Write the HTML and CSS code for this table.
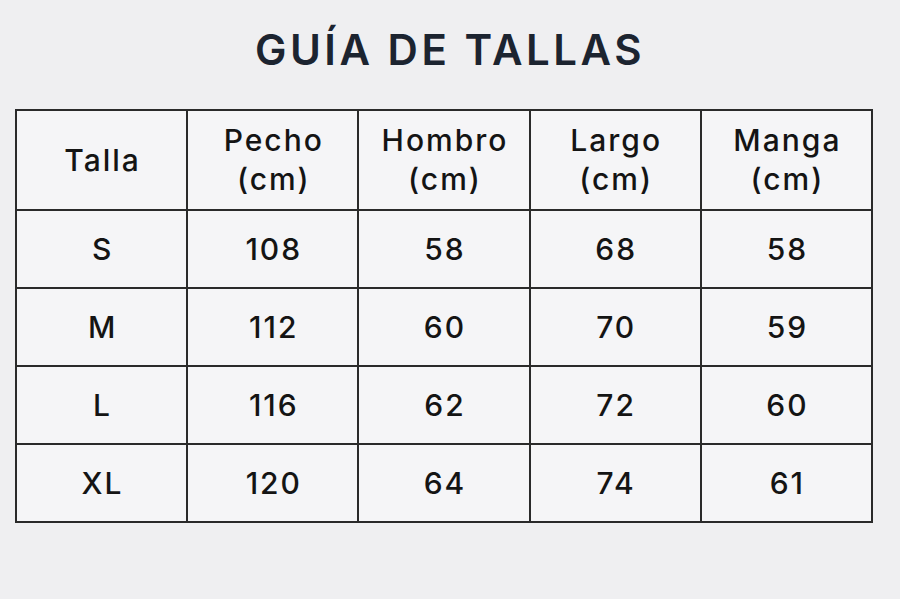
FILE: index.html
```html
<!DOCTYPE html>
<html lang="es">
<head>
<meta charset="utf-8">
<title>Guía de tallas</title>
<link rel="stylesheet" href="styles.css">
</head>
<body>
<main class="page">
  <h1 class="title">GUÍA DE TALLAS</h1>
  <table class="sizes">
    <thead>
      <tr class="head-row">
        <th>Talla</th>
        <th>Pecho<br>(cm)</th>
        <th>Hombro<br>(cm)</th>
        <th>Largo<br>(cm)</th>
        <th>Manga<br>(cm)</th>
      </tr>
    </thead>
    <tbody>
      <tr><td>S</td><td>108</td><td>58</td><td>68</td><td>58</td></tr>
      <tr><td>M</td><td>112</td><td>60</td><td>70</td><td>59</td></tr>
      <tr><td>L</td><td>116</td><td>62</td><td>72</td><td>60</td></tr>
      <tr><td>XL</td><td>120</td><td>64</td><td>74</td><td>61</td></tr>
    </tbody>
  </table>
</main>
</body>
</html>
```

FILE: styles.css
```css
html, body {
  margin: 0;
  padding: 0;
  background: #efeff1;
}
body {
  font-family: Inter, "Liberation Sans", sans-serif;
  color: #141414;
}
.page {
  width: 900px;
  height: 599px;
  padding-top: 26px;
  box-sizing: border-box;
}
.title {
  margin: 0;
  text-align: center;
  font-size: 42px;
  line-height: 48px;
  font-weight: 600;
  color: #1c2430;
  letter-spacing: 3.5px;
}
.sizes {
  margin: 35px 0 0 15px;
  width: 858px;
  border-collapse: collapse;
  table-layout: fixed;
  background: #f5f5f7;
}
.sizes th, .sizes td {
  border: 2px solid #2a2a2a;
  text-align: center;
  vertical-align: middle;
  font-size: 30px;
  font-weight: 500;
  padding: 0 0 0 2px;
  letter-spacing: 2px;
}
.head-row th {
  height: 98px;
  line-height: 39px;
}
.sizes td {
  height: 76px;
}
```
